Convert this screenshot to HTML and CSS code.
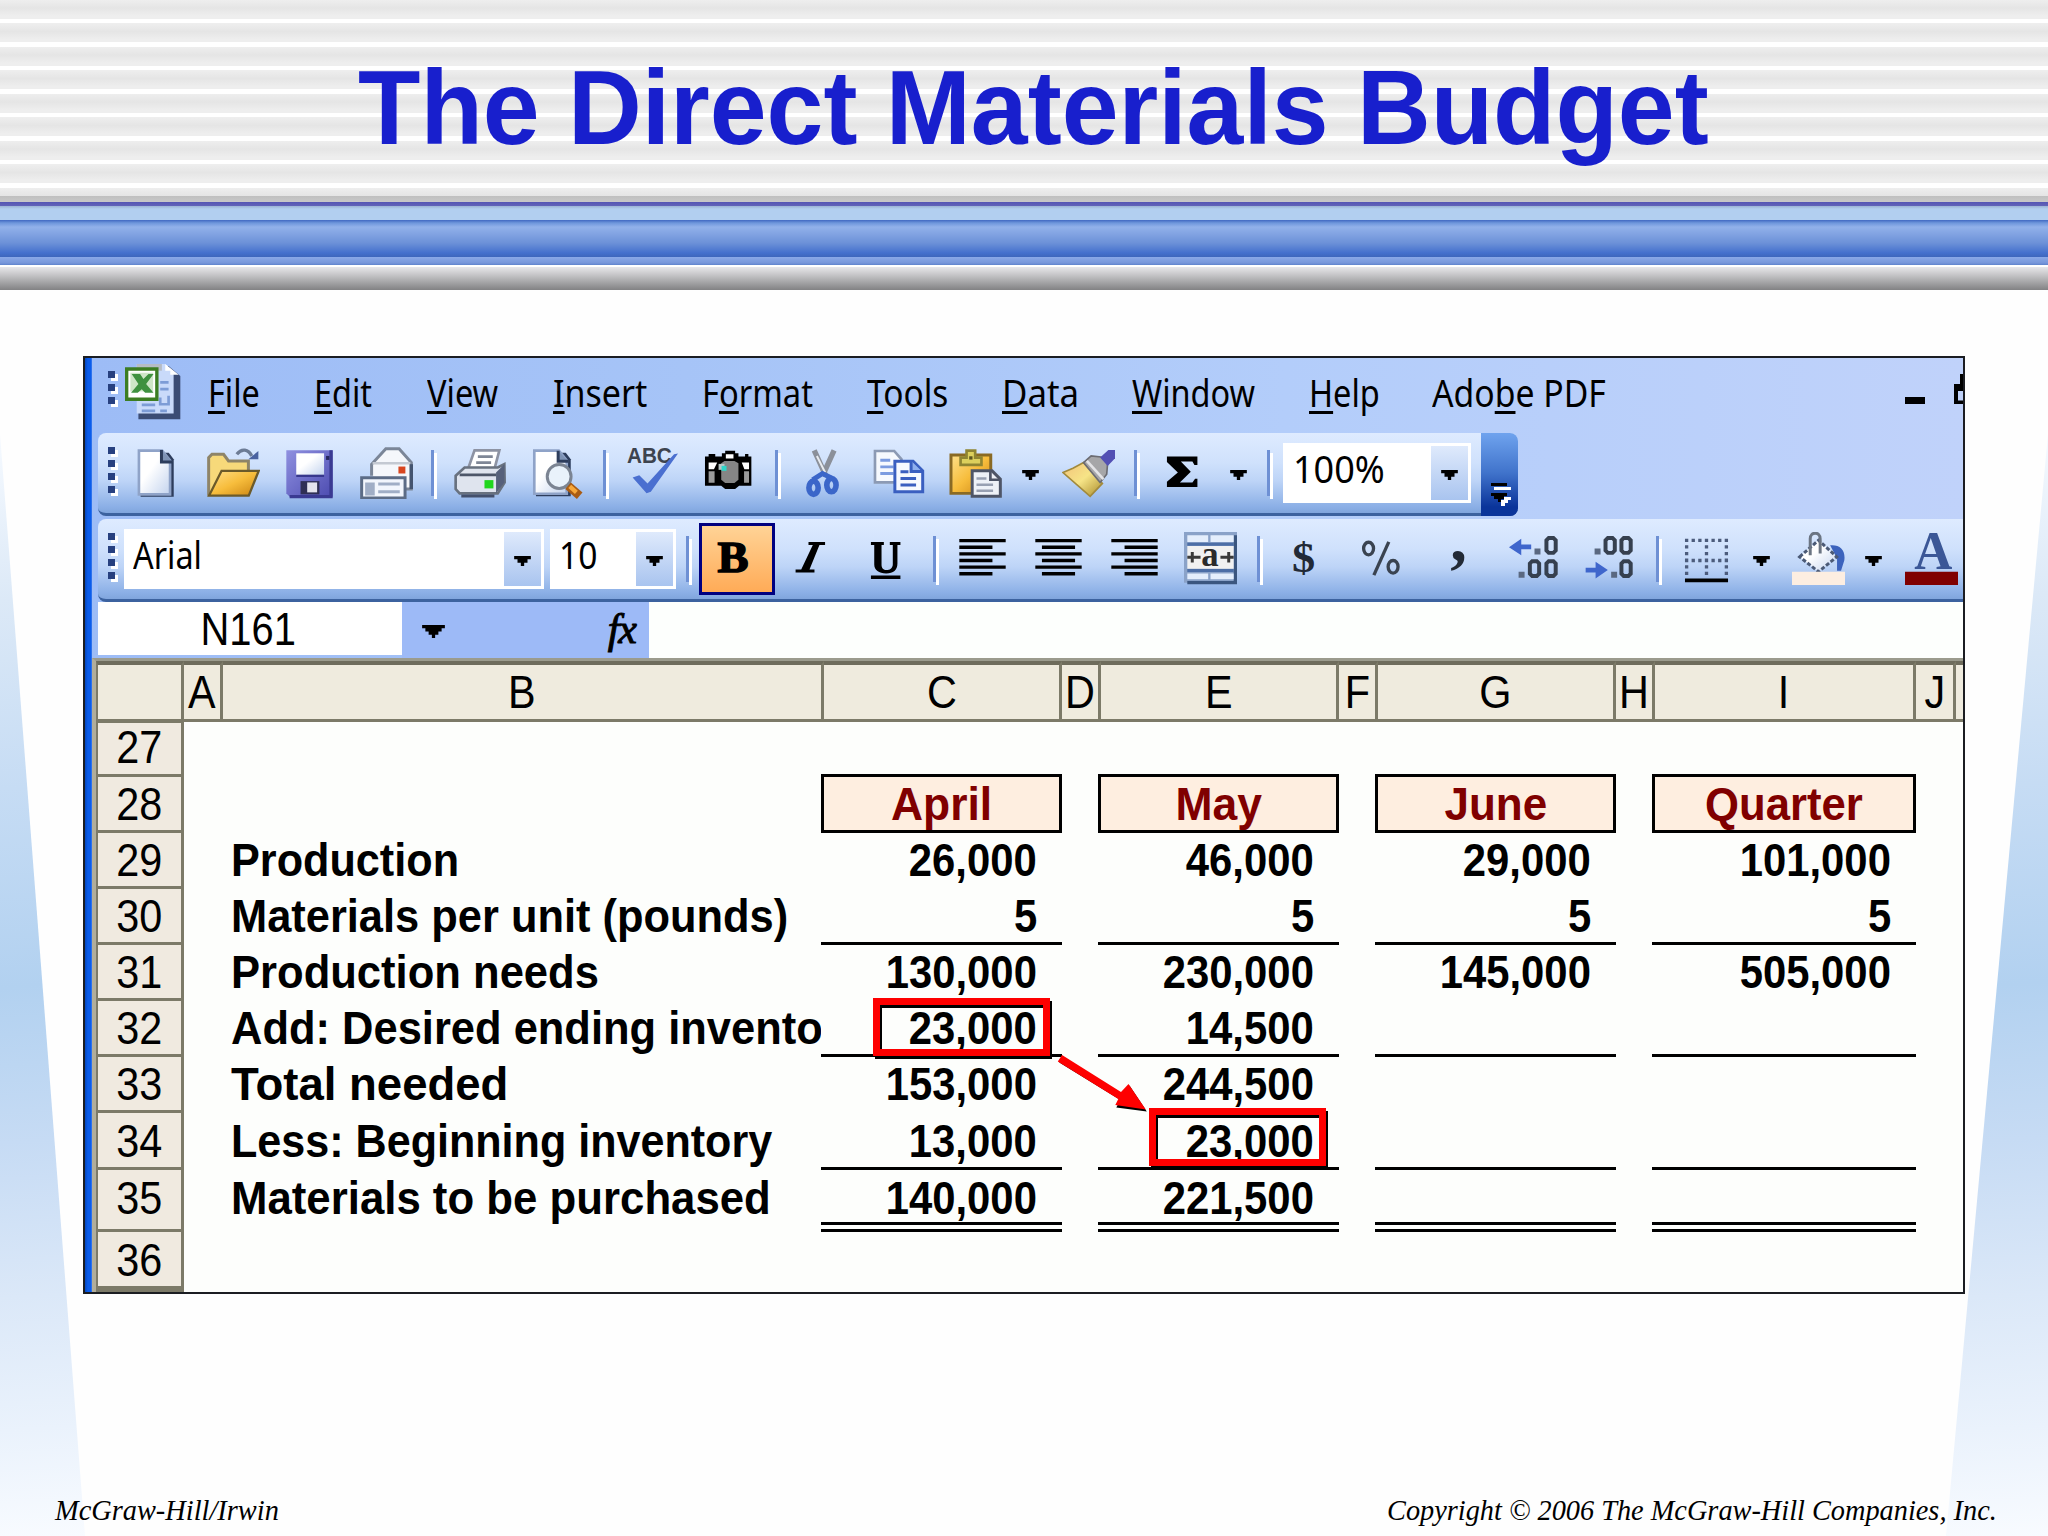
FILE: index.html
```html
<!DOCTYPE html>
<html lang="en">
<head>
  <meta charset="UTF-8" />
  <title>The Direct Materials Budget</title>
  <link rel="stylesheet" href="styles.css">
</head>
<body>
  <div class="slide">
    <header class="banner">
      <h1><span class="fit mid" data-w="1351">The Direct Materials Budget</span></h1>
      <div class="band"></div>
    </header>

    <main class="window">
      <!-- menu bar -->
      <nav class="menu">
        <div class="grip"><i></i><i></i><i></i></div>
        <svg class="app-icon" viewBox="0 0 17 17">
          <path d="M4 .6h9l3.500 3V16.500H4z" fill="#3b4c74"/>
          <path d="M3.500 0H12l2.500 2.600V14.800H3.500z" fill="#c9dafa"/>
          <path d="M3.500 0H11v2h-7.500z" fill="#b6bcc4"/>
          <path d="M12 0l4 3.200h-2.500V2H12z" fill="#fff"/>
          <path d="M10.500 5.500h2.500M10.500 7.500h2.500M5 12.200h4M5 14h4M10.500 10v2h2.500V9.500M10.500 14h2" stroke="#7d9cd6" stroke-width=".8" fill="none"/>
          <path d="M.5 1.500h9v9h-9z" fill="#fff" stroke="#3c7d22"/>
          <path d="M1.600 2.600h6.800v5.600H1.600z" fill="#cfe6c8"/>
          <path d="M2 3h2.500l1 1.500L7 3h1.500L6.300 6 8.500 8.600H6L5 7.500 3.800 8.600H1.800L4 6z" fill="#3f9140"/>
        </svg>
        <span><b class="fit" data-w="52"><u>F</u>ile</b></span>
        <span><b class="fit" data-w="58"><u>E</u>dit</b></span>
        <span><b class="fit" data-w="71"><u>V</u>iew</b></span>
        <span><b class="fit" data-w="94"><u>I</u>nsert</b></span>
        <span><b class="fit" data-w="111">F<u>o</u>rmat</b></span>
        <span><b class="fit" data-w="81"><u>T</u>ools</b></span>
        <span><b class="fit" data-w="77"><u>D</u>ata</b></span>
        <span><b class="fit" data-w="123"><u>W</u>indow</b></span>
        <span><b class="fit" data-w="71"><u>H</u>elp</b></span>
        <span><b class="fit" data-w="174">Ado<u>b</u>e PDF</b></span>
        <div class="minimize"></div>
        <svg class="restore" viewBox="0 0 11 30"><path d="M6 0h5v10H6zM0 10h11v7H4v9.500h7V30H0z"/></svg>
      </nav>

      <!-- standard toolbar -->
      <div class="bar standard">
        <div class="grip"><i></i><i></i><i></i><i></i></div>
        <svg class="icon" viewBox="0 0 16 16">
          <path d="M3.500 2H12l1.500 2v11.300H3.500z" fill="#2d3d5c"/>
          <path d="M3 1.400h7l2.400 3V14.600H3z" fill="url(#paper)" stroke="#8fa3c8" stroke-width=".8"/>
          <path d="M9.800 1.200v3.600h3.400" fill="#7e93b5" stroke="#2d3d5c" stroke-width=".9"/>
        </svg>
        <svg class="icon" viewBox="0 0 16 16">
          <path d="M.5 15V3.500l1-1h3.500l1.500 2h6V8" fill="#f7d97a" stroke="#8e8468" stroke-width=".9"/>
          <path d="M.6 15L4.400 7.500h11.200L12.600 15z" fill="url(#gold)" stroke="#6b5a2a" stroke-width=".7"/>
          <path d="M9 2.500c1.500-2 3.500-1.500 4.500.5" fill="none" stroke="#6d7c95"/>
          <path d="M12.500 4h3V1.500z" fill="#4a62a0"/>
        </svg>
        <svg class="icon" viewBox="0 0 16 16">
          <path d="M1 1.300h14v14H2l-1-1z" fill="url(#violet)"/>
          <path d="M14.500 1.300v14H2" fill="none" stroke="#3a3a92"/>
          <path d="M4 2.200h8.400v6.600H4z" fill="url(#paper)"/>
          <path d="M4 9h8.400" stroke="#37378c" stroke-width=".7"/>
          <path d="M5.300 10.600h5.700v4H5.300z" fill="#2f2f55"/>
          <path d="M7.300 11h3v3h-3z" fill="#e4e4ee"/>
          <path d="M13 3h1v1.200h-1z" fill="#26265e"/>
        </svg>
        <svg class="icon" viewBox="0 0 16 16">
          <path d="M3.500 9V5.500L7.800.8h4L15.500 5v8h-2" fill="#f5f7fb" stroke="#7b8698" stroke-width=".9"/>
          <path d="M3.800 5.200h11.400" stroke="#c4c9d2" stroke-width=".7"/>
          <path d="M15.500 5.500V13" stroke="#44546f" stroke-width="1.100"/>
          <path d="M11.600 6.200h2.100v2.100h-2.100z" fill="#d84620"/>
          <path d="M.5 9.600h13.100v6.100H.5z" fill="#f2f6fd" stroke="#5c6c86" stroke-width=".9"/>
          <path d="M2 11.500h2v3H2zM5.500 11.500H12M5.500 13.800H12" stroke="#a0aec6" stroke-width=".9" fill="#a0aec6"/>
        </svg>
        <div class="sep"></div>
        <svg class="icon" viewBox="0 0 16 16">
          <path d="M4.500 7L6.500 1.300h7.500L12.500 7z" fill="#fff" stroke="#8d93a3" stroke-width=".8"/>
          <path d="M7.500 3.200h4.500M7 5h4.500" stroke="#7f8796" stroke-width=".8"/>
          <path d="M.8 9L3.500 6.500h10L15.500 5.500 15.600 11 13.500 14.300H2L.8 13z" fill="#dfe4ee" stroke="#68717f" stroke-width=".8"/>
          <path d="M13 8l2.500-2.500V11L13 14.300z" fill="#56607a"/>
          <path d="M2 8.700h11" stroke="#4d5668" stroke-width=".8"/>
          <path d="M2.500 15.100h10" stroke="#44506c" stroke-width=".9"/>
          <path d="M9.500 10.300h2.700v2.500H9.500z" fill="#20d61c"/>
        </svg>
        <svg class="icon" viewBox="0 0 16 16">
          <path d="M1.800 2h9l1.500 2v11.200H1.800z" fill="#2d3d5c"/>
          <path d="M1.300 1.400h7.400l2.400 3V14.400H1.300z" fill="url(#paper)" stroke="#8fa3c8" stroke-width=".8"/>
          <path d="M8.500 1.400v3.200h3" fill="#7e93b5" stroke="#2d3d5c" stroke-width=".9"/>
          <circle cx="8.800" cy="9.200" r="3.600" fill="#e9f2fb" stroke="#7b8492" stroke-width=".9"/>
          <path d="M11.500 12l3.500 3" stroke="#a95c14" stroke-width="2.600"/>
          <path d="M12 12.200l2 1.800" stroke="#f7a83a" stroke-width="1.300"/>
        </svg>
        <div class="sep"></div>
        <svg class="icon" viewBox="0 0 16 16">
          <text x=".3" y="5.200" textLength="13.500" lengthAdjust="spacingAndGlyphs" font-family="Liberation Sans, sans-serif" font-weight="bold" font-size="6.800" fill="#3d434e">ABC</text>
          <path d="M2 9.500L4 8.800 6.500 11.300 14.500 2.500 15.700 2.300 7.500 13.800 6.200 14.300z" fill="#4a6fd0"/>
        </svg>
        <svg class="icon" viewBox="0 0 16 16">
          <path d="M.9 4V3.200H2V2.400h2v.8h2V2.200h1v-.8h3v.8h1v1h2v-.8h1v.8h.9V12h-3.700l-1.200 1H7l-1.200-1H.9z"/>
          <path d="M2 5h2.600L3.600 7H2zM12 5h2.200v2h-1.400zM7.200 2.500h2.300v1.300H7.200z" fill="#fff"/>
          <path d="M2 7.600h1.800v3.500H2zM12.700 7.600h1.500v3.500h-1.500z" fill="#9b9b9b"/>
          <path d="M5.800 5.200l1-.7h3l1.200.7v5l-1.200 1H7l-1.200-1z" fill="#858585"/>
          <path d="M5 5.400h1.800v1.800H5z" fill="#b9c6c6"/>
          <path d="M5.900 6h1.500v1.500H5.900z" fill="#2fd6c8"/>
        </svg>
        <div class="sep"></div>
        <svg class="icon" viewBox="0 0 16 16">
          <path d="M5.500 1.300L9 9M11.500 1.300L8 9" stroke="#8b909a" stroke-width="1.600"/>
          <path d="M6.300 3L8.800 8" stroke="#e8ebf0" stroke-width=".6"/>
          <ellipse cx="5.300" cy="12.600" rx="1.400" ry="2" fill="none" stroke="#3b66c9" stroke-width="1.700"/>
          <ellipse cx="10.700" cy="11.800" rx="1.400" ry="2" fill="none" stroke="#3b66c9" stroke-width="1.700"/>
          <path d="M5 10.200L8 8.300l3 1.500" fill="none" stroke="#3b66c9" stroke-width="1.500"/>
        </svg>
        <svg class="icon" viewBox="0 0 16 16">
          <path d="M.6 1.500h5.800l2.200 2.500v7H.6z" fill="#f6f9fe" stroke="#8c9ab4" stroke-width=".8"/>
          <path d="M2.200 4.300h3M2.200 6.300h4M2.200 8.300h4" stroke="#7b9be0" stroke-width=".9"/>
          <path d="M6.600 4.600h5.500l2.900 2.900v6.300H6.600z" fill="#f6f9fe" stroke="#3a5fc0" stroke-width=".9"/>
          <path d="M11.500 4.500v3.200h3.300" fill="#8fb0ee" stroke="#3a5fc0" stroke-width=".9"/>
          <path d="M8.300 7.800h2.400M8.300 9.800H13M8.300 11.800H13" stroke="#3a5fc0" stroke-width=".9"/>
        </svg>
        <svg class="icon" viewBox="0 0 16 16">
          <path d="M.6 2.700h12v11.600H.6z" fill="url(#gold)" stroke="#8a6a24" stroke-width=".9"/>
          <path d="M3.500 5.700V3.500h1.800V1.400h2.600v2.100h1.900v2.200z" fill="#ddd05c" stroke="#8f8532" stroke-width=".8"/>
          <path d="M6.100 3.100h1v1h-1z" fill="#5c5620"/>
          <path d="M7 7.500h6l2.500 2.500v5.200H7z" fill="#eef1f7" stroke="#4e5567" stroke-width=".9"/>
          <path d="M8.300 9.800h3M8.300 11.700h5M8.300 13.500h5" stroke="#98a0b2" stroke-width=".8"/>
          <path d="M12.500 7.500v2.700h3" fill="none" stroke="#4e5567" stroke-width=".8"/>
        </svg>
        <svg class="arrow" viewBox="0 0 5 3"><path d="M0 0h5v1H4v1H3v1H2V2H1V1H0z"/></svg>
        <svg class="icon" viewBox="0 0 16 16">
          <path d="M.3 8l3-1.300 3.200-1.700 5.700 6.300-3.700 3.900z" fill="url(#brush)" stroke="#a28a3c" stroke-width=".5"/>
          <path d="M6.500 5l2.300-2 3 .3 2 1.500-.3 3.700-2 2.500z" fill="#a6a6a8" stroke="#6c6c72" stroke-width=".5"/>
          <path d="M7.500 4.500l5 5.500" stroke="#e3e3e6" stroke-width=".8"/>
          <path d="M11.500 3.500l2.500-2.300h2v2.500L13.800 6z" fill="#5350b4"/>
        </svg>
        <div class="sep"></div>
        <svg class="icon" viewBox="0 0 16 16">
          <path d="M3.300 3.200h9.200v2.500h-.9l-.6-1H7.500l3 3.100-3.300 3.200H11l.8-1.100h.7v2.500H3.300v-1.600L6.600 8 3.300 4.800z"/>
        </svg>
        <svg class="arrow" viewBox="0 0 5 3"><path d="M0 0h5v1H4v1H3v1H2V2H1V1H0z"/></svg>
        <div class="sep"></div>
        <div class="combo zoom">
          <b class="fit" data-w="92">100%</b>
          <div class="drop"><svg class="tick" viewBox="0 0 5 3"><path d="M0 0h5v1H4v1H3v1H2V2H1V1H0z"/></svg></div>
        </div>
        <div class="cap">
          <svg viewBox="0 0 20 24">
            <path d="M3 4h17v3H3zM10 23v-6h3v-3h7v3h-3v3h-3v3z" fill="#fff"/>
            <path d="M0 0h16v3H0zM0 10h16v3h-3v3h-3v3H7v-3H3v-3H0z"/>
          </svg>
        </div>
      </div>

      <!-- formatting toolbar -->
      <div class="bar formatting">
        <div class="grip"><i></i><i></i><i></i><i></i></div>
        <div class="combo font">
          <b class="fit" data-w="69">Arial</b>
          <div class="drop"><svg class="tick" viewBox="0 0 5 3"><path d="M0 0h5v1H4v1H3v1H2V2H1V1H0z"/></svg></div>
        </div>
        <div class="combo size">
          <b class="fit" data-w="38">10</b>
          <div class="drop"><svg class="tick" viewBox="0 0 5 3"><path d="M0 0h5v1H4v1H3v1H2V2H1V1H0z"/></svg></div>
        </div>
        <div class="sep"></div>
        <div class="pressed"><span class="fit mid" data-w="31">B</span></div>
        <svg class="icon" viewBox="0 0 16 16">
          <path d="M7.700 3h5v.9h-1.700L8 11.300h1.500v.9H3.800v-.9h1.700L9 3.900H7.700z"/>
        </svg>
        <svg class="icon" viewBox="0 0 16 16">
          <path d="M3.300 3h3.900v.9h-.7v6c0 1 .6 1.600 1.500 1.600s1.900-.6 1.900-1.800V3.900H9V3h3.200v.9h-.9v5.600c0 2-1.200 3-3.400 3S4.300 11.500 4.300 9.800V3.900h-1zM3.300 13.100h8.900v1.100H3.300z"/>
        </svg>
        <div class="sep"></div>
        <svg class="icon lines" viewBox="0 0 16 16"><path d="M1 2.600h14M1 4.600h10M1 6.600h14M1 8.600h10M1 10.600h14M1 12.600h10"/></svg>
        <svg class="icon lines" viewBox="0 0 16 16"><path d="M1 2.600h14M3 4.600h10M1 6.600h14M3 8.600h10M1 10.600h14M3 12.600h10"/></svg>
        <svg class="icon lines" viewBox="0 0 16 16"><path d="M1 2.600h14M5 4.600h10M1 6.600h14M5 8.600h10M1 10.600h14M5 12.600h10"/></svg>
        <svg class="icon" viewBox="0 0 16 16">
          <path d="M0 0h16v15.300H0z" fill="#8aa2c8"/>
          <path d="M15.500 1v14.300H1" fill="none" stroke="#3b567f"/>
          <path d="M1 1h6.300v2H1zM8 1h7v2H8zM1 12.500h6.300v1.800H1zM8 12.500h7v1.800H8z" fill="#e4eefc"/>
          <path d="M1 4.200h14v6.900H1z" fill="#f1f1f1"/>
          <path d="M1 3.700h14M1 11.600h14" stroke="#4c6ea6" stroke-width=".9"/>
          <path d="M1 7.600h4M11 7.600h4M2.500 6v3.200M13.500 6v3.200" stroke="#3a3a3a" stroke-width=".9"/>
          <text x="5.200" y="10.200" font-family="Liberation Serif, serif" font-weight="bold" font-size="10.500" fill="#2b2b2b">a</text>
        </svg>
        <div class="sep"></div>
        <svg class="icon glyph" viewBox="0 0 16 16"><text x="4.200" y="12" textLength="7" lengthAdjust="spacingAndGlyphs" font-size="12.800">$</text></svg>
        <svg class="icon" viewBox="0 0 16 16">
          <ellipse cx="4.400" cy="5" rx="1.500" ry="1.900" fill="none" stroke="#3a4350"/>
          <ellipse cx="11.800" cy="10.500" rx="1.500" ry="1.900" fill="none" stroke="#3a4350"/>
          <path d="M10.500 3L6 13" stroke="#3a4350"/>
        </svg>
        <svg class="icon glyph" viewBox="0 0 16 16"><text x="5.800" y="8.800" font-size="20">,</text></svg>
        <svg class="icon" viewBox="0 0 16 16">
          <path d="M.3 4.600L4 2v1.800h3v1.400H4V7z" fill="#3f66cc"/>
          <path d="M8 5h1.800v1.800H8zM3.200 12h1.800v1.800H3.200z" fill="#5a6880"/>
          <path d="M12.300 1.800h1.400l.7.700v3.100l-.7.700h-1.400l-.7-.7V2.500zM7.300 8.800h1.400l.7.700v3.100l-.7.700H7.300l-.7-.7V9.500zM12.300 8.800h1.400l.7.700v3.100l-.7.700h-1.400l-.7-.7V9.500z" fill="none" stroke="#36404f" stroke-width="1.200"/>
        </svg>
        <svg class="icon" viewBox="0 0 16 16">
          <path d="M7.500 11.500L3.800 9v1.800h-3v1.400h3V14z" fill="#3f66cc"/>
          <path d="M3.500 5h1.800v1.800H3.500zM8.500 12h1.800v1.800H8.500z" fill="#5a6880"/>
          <path d="M7.500 1.800h1.400l.7.700v3.100l-.7.700H7.500l-.7-.7V2.500zM12.300 1.800h1.400l.7.700v3.100l-.7.700h-1.400l-.7-.7V2.500zM12.300 8.800h1.400l.7.700v3.100l-.7.700h-1.400l-.7-.7V9.500z" fill="none" stroke="#36404f" stroke-width="1.200"/>
        </svg>
        <div class="sep"></div>
        <svg class="icon" viewBox="0 0 16 16">
          <path d="M1.500 2.500h13M1.500 8.600h13M2 2v11.500M8 2v11.500M14 2v11.500" stroke="#4c5c7c" stroke-width="1" stroke-dasharray="1 1"/>
          <path d="M1.500 14.600h13" stroke="#000" stroke-width="1.200"/>
        </svg>
        <svg class="arrow" viewBox="0 0 5 3"><path d="M0 0h5v1H4v1H3v1H2V2H1V1H0z"/></svg>
        <svg class="icon" viewBox="0 0 16 16">
          <path d="M11.500 4c3-.3 4.700 1.500 4.300 4.500l-1 3.200h-1.200V8z" fill="#3c63bd"/>
          <path d="M2.300 7.500L8 2.500l5.500 5L8 12z" fill="url(#paper)" stroke="#4b5a76" stroke-width=".9" stroke-dasharray="1.200 .6"/>
          <path d="M5.500 7V2c0-2.200 3-2.200 3 0v4.500" fill="none" stroke="#6b7583" stroke-width=".9"/>
          <path d="M0 12h16v4H0z" fill="#fdeee1"/>
        </svg>
        <svg class="arrow" viewBox="0 0 5 3"><path d="M0 0h5v1H4v1H3v1H2V2H1V1H0z"/></svg>
        <svg class="icon" viewBox="0 0 16 16">
          <text x="2.800" y="11.300" textLength="11.500" lengthAdjust="spacingAndGlyphs" font-family="Liberation Serif, serif" font-weight="bold" font-size="16.500" fill="#3b5797">A</text>
          <path d="M0 12h16v4H0z" fill="#800000"/>
        </svg>
      </div>

      <!-- formula bar -->
      <div class="formula">
        <div class="name-box"><span class="fit mid" data-w="95">N161</span></div>
        <div class="name-tools">
          <svg class="name-arrow" viewBox="0 0 7 4"><path d="M0 0h7v1H6v1H5v1H4v1H3V3H2V2H1V1H0z"/></svg>
          <i class="fx">fx</i>
        </div>
        <div class="entry"></div>
      </div>

      <!-- worksheet -->
      <div class="sheet">
        <div class="row cols">
          <div class="corner"></div>
          <div><span>A</span></div>
          <div><span>B</span></div>
          <div><span>C</span></div>
          <div><span>D</span></div>
          <div><span>E</span></div>
          <div><span>F</span></div>
          <div><span>G</span></div>
          <div><span>H</span></div>
          <div><span>I</span></div>
          <div><span>J</span></div>
          <div></div>
        </div>
        <div class="row first"><div class="num"><span>27</span></div></div>
        <div class="row months">
          <div class="num"><span>28</span></div>
          <div class="label"></div>
          <div class="cell c"><b class="fit mid" data-w="101">April</b></div>
          <div class="cell e"><b class="fit mid" data-w="86">May</b></div>
          <div class="cell g"><b class="fit mid" data-w="103">June</b></div>
          <div class="cell i"><b class="fit mid" data-w="158">Quarter</b></div>
        </div>
        <div class="row">
          <div class="num"><span>29</span></div>
          <div class="label"><b class="fit" data-w="228">Production</b></div>
          <div class="cell c"><b>26,000</b></div>
          <div class="cell e"><b>46,000</b></div>
          <div class="cell g"><b>29,000</b></div>
          <div class="cell i"><b>101,000</b></div>
        </div>
        <div class="row ruled">
          <div class="num"><span>30</span></div>
          <div class="label"><b class="fit" data-w="557">Materials per unit (pounds)</b></div>
          <div class="cell c"><b>5</b></div>
          <div class="cell e"><b>5</b></div>
          <div class="cell g"><b>5</b></div>
          <div class="cell i"><b>5</b></div>
        </div>
        <div class="row">
          <div class="num"><span>31</span></div>
          <div class="label"><b class="fit" data-w="368">Production needs</b></div>
          <div class="cell c"><b>130,000</b></div>
          <div class="cell e"><b>230,000</b></div>
          <div class="cell g"><b>145,000</b></div>
          <div class="cell i"><b>505,000</b></div>
        </div>
        <div class="row ruled">
          <div class="num"><span>32</span></div>
          <div class="label"><b class="fit" data-w="592">Add: Desired ending invento</b></div>
          <div class="cell c"><b>23,000</b>
            <div class="mark from"></div>
            <svg class="pointer" viewBox="1050 1050 104 68">
              <path d="M1061 1054l59 38 8.500-9 17.300 26-30.500-4 4-7.500-61-37.500z" transform="translate(1 2.500)"/>
              <path d="M1062 1055l59 37 7.500-8 17.300 25.500-30.500-4.500 3-6-60.500-37.500z" fill="#fe0000"/>
            </svg>
          </div>
          <div class="cell e"><b>14,500</b></div>
          <div class="cell g"></div>
          <div class="cell i"></div>
        </div>
        <div class="row">
          <div class="num"><span>33</span></div>
          <div class="label"><b class="fit" data-w="277">Total needed</b></div>
          <div class="cell c"><b>153,000</b></div>
          <div class="cell e"><b>244,500</b></div>
          <div class="cell g"></div>
          <div class="cell i"></div>
        </div>
        <div class="row ruled less">
          <div class="num"><span>34</span></div>
          <div class="label"><b class="fit" data-w="541">Less: Beginning inventory</b></div>
          <div class="cell c"><b>13,000</b></div>
          <div class="cell e"><b>23,000</b><div class="mark to"></div></div>
          <div class="cell g"></div>
          <div class="cell i"></div>
        </div>
        <div class="row double">
          <div class="num"><span>35</span></div>
          <div class="label"><b class="fit" data-w="540">Materials to be purchased</b></div>
          <div class="cell c"><b>140,000</b></div>
          <div class="cell e"><b>221,500</b></div>
          <div class="cell g"></div>
          <div class="cell i"></div>
        </div>
        <div class="row last"><div class="num"><span>36</span></div></div>
      </div>
    </main>

    <footer class="footer">
      <span class="fit" data-w="224">McGraw-Hill/Irwin</span>
      <span class="fit right" data-w="610">Copyright © 2006 The McGraw-Hill Companies, Inc.</span>
    </footer>
  </div>

  <!-- shared icon gradients -->
  <svg class="defs" width="0" height="0">
    <defs>
      <linearGradient id="paper" x1="0" y1="0" x2="1" y2="1"><stop offset=".4" stop-color="#fff"/><stop offset="1" stop-color="#c3d3ee"/></linearGradient>
      <linearGradient id="gold" x1="0" y1="0" x2="1" y2="1"><stop offset="0" stop-color="#ffe08a"/><stop offset=".5" stop-color="#f7bd3c"/><stop offset="1" stop-color="#c98210"/></linearGradient>
      <linearGradient id="violet" x1="0" y1="0" x2="1" y2="1"><stop offset="0" stop-color="#8f90e0"/><stop offset="1" stop-color="#4c4bb0"/></linearGradient>
      <linearGradient id="brush" x1="0" y1="0" x2="1" y2="1"><stop offset="0" stop-color="#f2c27a"/><stop offset=".5" stop-color="#f6e487"/><stop offset="1" stop-color="#a88a2a"/></linearGradient>
    </defs>
  </svg>
  <script src="fit.js"></script>
</body>
</html>
```
FILE: styles.css
```css
* {
  box-sizing: border-box;
}
body {
  margin: 0;
  background: #fefefe;
  font-family: "Liberation Sans", Arial, sans-serif;
  color: #000;
}
.defs {
  position: absolute;
}
.slide {
  position: relative;
  width: 2048px;
  height: 1536px;
  overflow: hidden;
  isolation: isolate;
}
/* light blue wedges on both edges of the slide */
.slide::before,
.slide::after {
  content: "";
  position: absolute;
  z-index: -1;
  top: 434px;
  bottom: 0;
  width: 102px;
  background: linear-gradient(176deg, #f6faff 0%, #dce9f7 15%, #c6dcf4 32%, #b2d1f0 50%, #c6dbf4 64%, #dbe8f8 78%, #eaf2fc 90%, #f8fbff 100%);
}
.slide::before {
  left: 0;
  width: 85px;
  clip-path: polygon(0 0, 100% 100%, 0 100%);
}
.slide::after {
  right: 0;
  clip-path: polygon(100% 0, 100% 100%, 0 100%);
}
.fit {
  display: inline-block;
  white-space: nowrap;
  transform-origin: left center;
}
.fit.mid {
  transform-origin: center;
}
.fit.right {
  transform-origin: right center;
}

/* banner */
.banner {
  height: 290px;
}
h1 {
  margin: 0;
  height: 196px;
  padding-left: 18px;
  font-size: 105px;
  line-height: 215px;
  text-align: center;
  color: #181fcd;
  background: repeating-linear-gradient(#eeeeee 0, #e5e5e5 8px, #eeeeee 16px, #eeeeee 18.500px, #ffffff 19px, #ffffff 23px, #eeeeee 23.500px);
}
.band {
  height: 94px;
  background: linear-gradient(#c0c0c0 0, #c8c8c8 6px, #5556b4 6px, #6264b8 10px, #9cb4d4 10px, #b2cff0 13px, #b2cff0 24px, #4168c2 24px, #6f97dc 27px, #92b1ea 31px, #6c91d8 47px, #4470cd 57px, #3e66bc 61px, #8aa9e8 61px, #7796da 67px, #5e83cc 69px, #fff 69px, #fff 71px, #e8e7ea 71px, #b8b8ba 82px, #828284 94px);
}

/* spreadsheet window */
.window {
  width: 1882px;
  height: 938px;
  margin: 66px 0 0 83px;
  border: 2px solid #1b1d22;
  padding-left: 7px;
  overflow: hidden;
  background: linear-gradient(90deg, #0548c0 0, #0a5ceb 3px, #0a5ceb 6px, #4f86ee 7px, #9dbcf6 7px, #a6c4f7 600px, #b3cdfa 1200px, #c0d2fa 100%);
}
.menu {
  display: grid;
  grid-template-columns: 17px 83px 106px 113px 126px 149px 165px 135px 130px 177px 123px 473px 49px 11px;
  width: 1873px;
  height: 75px;
  padding-left: 16px;
  align-items: start;
  font-family: "Noto Sans", sans-serif;
  font-size: 38px;
  line-height: 69px;
}
.menu b,
.combo b {
  font-weight: normal;
}
.menu u {
  text-decoration-thickness: 3px;
  text-underline-offset: 4px;
  text-decoration-skip-ink: none;
}
.grip {
  display: flex;
  flex-direction: column;
  gap: 6px;
  margin-top: 14px;
}
.grip i {
  width: 7px;
  height: 7px;
  background: #27407f;
  box-shadow: 3px 3px 0 #fff;
}
.menu .grip {
  margin-top: 13px;
}
.app-icon {
  width: 57px;
  height: 57px;
  margin-top: 6px;
}
.minimize {
  width: 20px;
  height: 7px;
  margin-top: 39px;
  background: #000;
}
.restore {
  width: 11px;
  height: 30px;
  margin-top: 16px;
}

/* toolbars */
.bar {
  display: grid;
  align-items: start;
  height: 83px;
  margin-left: 6px;
  padding-left: 10px;
  border-bottom: 3px solid #3c629f;
  border-radius: 8px 0 0 8px;
  background: linear-gradient(#deebff 0, #cfe1fc 30px, #bdd4f7 48px, #8bafe6 74px, #80a5dd 80px);
}
.standard {
  grid-template-columns: 21px 78px 76px 77px 71px 22px 77px 73px 23px 76px 73px 21px 77px 76px 73px 40px 72px 22px 74px 37px 16px 198px 37px;
  width: 1420px;
  border-radius: 8px;
}
.formatting {
  grid-template-columns: 16px 426px 136px 13px 84px 77px 73px 23px 76px 76px 76px 73px 21px 76px 77px 77px 75px 73px 24px 73px 39px 73px 40px 60px;
  width: 1900px;
  margin-top: 3px;
}
.icon {
  width: 53px;
  height: 53px;
  margin-top: 13px;
}
.arrow {
  width: 17px;
  height: 10px;
  margin-top: 37px;
}
.sep {
  width: 3px;
  height: 46px;
  margin-top: 17px;
  background: #6e90d4;
  box-shadow: 3px 3px 0 #fff;
}
.lines path {
  stroke: #000;
  stroke-width: 1;
}
.glyph text {
  font-family: "Liberation Serif", serif;
  font-weight: bold;
  fill: #222a36;
}
.combo {
  display: flex;
  justify-content: space-between;
  height: 60px;
  margin-top: 10px;
  padding: 3px 3px 3px 9px;
  background: #fff;
  font-family: "Noto Sans", sans-serif;
  font-size: 38px;
  line-height: 45px;
}
.combo.zoom {
  width: 188px;
  padding-left: 10px;
}
.combo.font {
  width: 420px;
}
.combo.size {
  width: 126px;
}
.drop {
  display: flex;
  justify-content: center;
  width: 37px;
  padding-top: 24px;
  background: linear-gradient(#dfeafc, #a9c4ef);
}
.tick {
  width: 17px;
  height: 10px;
}
.pressed {
  width: 76px;
  height: 72px;
  margin-top: 4px;
  border: 3px solid #000080;
  padding-right: 7px;
  background: linear-gradient(#ffd396, #ffab57);
  font: bold 45px/62px "Liberation Serif", serif;
  text-align: center;
  -webkit-text-stroke: 1.500px #000;
}
.cap {
  width: 37px;
  height: 83px;
  padding: 50px 0 0 10px;
  border-radius: 0 8px 8px 0;
  background: linear-gradient(#6fa3ee, #4073cb 40px, #0a349a 74px);
}
.cap svg {
  display: block;
  width: 20px;
  height: 24px;
}

/* formula bar */
.formula {
  display: flex;
  height: 56px;
  margin-left: 6px;
}
.name-box {
  width: 304px;
  height: 53px;
  padding-right: 4px;
  background: #fff;
  font-size: 47px;
  line-height: 54px;
  text-align: center;
}
.name-tools {
  display: flex;
  justify-content: space-between;
  width: 247px;
  height: 56px;
  padding: 0 13px 0 20px;
  background: #9dbaf7;
}
.name-arrow {
  width: 23px;
  height: 13px;
  margin-top: 23px;
}
.fx {
  font: italic 42px/54px "Liberation Serif", serif;
  letter-spacing: -1px;
  -webkit-text-stroke: 1px #000;
}
.entry {
  flex: 1;
  background: #fdfffd;
}

/* worksheet */
.sheet {
  width: 1900px;
  border-top: 3px solid #9b9b8d;
  border-left: 4px solid #b1ad9b;
  background: #fdfefc;
}
.row {
  display: flex;
  height: 56px;
  font-size: 47px;
  line-height: 53px;
}
.row span {
  display: inline-block;
  transform: scaleX(.88);
}
.cols {
  display: grid;
  grid-template-columns: 88px 39px 601px 238px 39px 238px 39px 238px 39px 261px 40px 60px;
  height: 59px;
  line-height: 54px;
  text-align: center;
}
.cols div {
  border-top: 4px solid #6e6c5c;
  border-right: 3px solid #7c7a68;
  border-bottom: 3px solid #7c7a68;
  background: #efebde;
}
.cols .corner,
.num {
  border-left: 2px solid #7c7a68;
}
.num {
  flex: 0 0 88px;
  border-right: 3px solid #7c7a68;
  border-bottom: 3px solid #7c7a68;
  background: #f0eae0;
  text-align: center;
}
.first {
  height: 57px;
}
.first .num {
  box-shadow: inset 0 3px 0 #7c7a68;
}
.less {
  height: 57px;
  line-height: 55px;
}
.double {
  height: 62px;
  line-height: 55px;
}
.last {
  height: 62px;
}
.last .num {
  border-bottom-width: 8px;
  line-height: 55px;
}
.label {
  flex: 0 0 637px;
  padding-left: 47px;
  overflow: hidden;
  white-space: nowrap;
}
/* a narrow spacer column follows each figure column */
.cell {
  position: relative;
  flex: 0 0 241px;
  margin-right: 36px;
  padding-right: 25px;
  text-align: right;
}
.cell.i {
  flex-basis: 264px;
}
.cell > b:not(.fit) {
  display: inline-block;
  transform: scaleX(.89);
  transform-origin: right center;
}
.ruled .cell {
  border-bottom: 3px solid #000;
}
.double .cell {
  border-bottom: 10px double #000;
}
.months .cell {
  height: 59px;
  margin-top: -3px;
  padding: 0;
  border: 3px solid #000;
  background: #feeee0;
  color: #800000;
  text-align: center;
}

/* highlighted figures */
.mark {
  position: absolute;
  z-index: 2;
  width: 177px;
  height: 58px;
  border: 7px solid #fe0000;
  box-shadow: 2px 3px 0 #000, inset 2px 3px 0 #000;
}
.from {
  left: 52px;
  top: -3px;
}
.to {
  left: 51px;
  top: -5px;
}
.pointer {
  position: absolute;
  z-index: 3;
  left: 229px;
  top: 49px;
  width: 104px;
  height: 68px;
}

/* footer */
.footer {
  display: flex;
  justify-content: space-between;
  padding: 197px 51px 0 55px;
  font: italic 28.500px/40px "Liberation Serif", serif;
}
```
FILE: fit.js
```js
document.querySelectorAll('.fit').forEach(function (el) {
  var w = Number(el.dataset.w);
  el.style.transform = 'scaleX(' + w / el.offsetWidth + ')';
});
```
